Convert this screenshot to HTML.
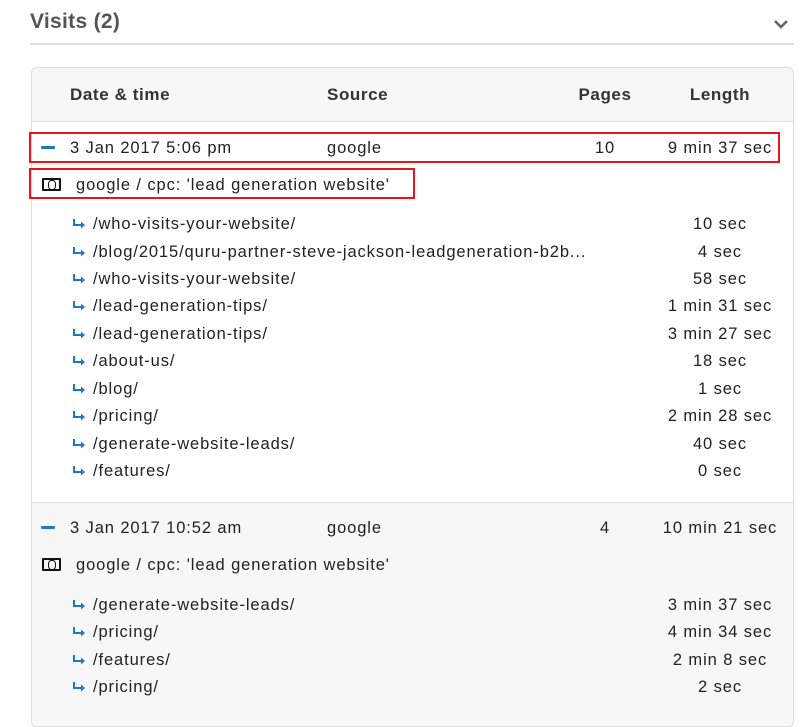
<!DOCTYPE html>
<html><head><meta charset="utf-8"><style>
*{margin:0;padding:0;box-sizing:border-box}
body{width:800px;height:718px;background:#fff;font-family:"Liberation Sans",sans-serif;color:#222;position:relative;overflow:hidden;font-size:16.5px;letter-spacing:0.9px}
.a{position:absolute;line-height:20px;white-space:nowrap}
.c{text-align:center}
.h{font-weight:bold;color:#333;font-size:17px;letter-spacing:0.6px}
.arr{position:absolute;width:14px;height:10px}
.box{position:absolute;left:31px;width:763px;top:67px;height:660px;border:1px solid #ddd;border-radius:6px;overflow:hidden}
.red{position:absolute;border:2px solid #e5161b}
.minus{position:absolute;width:14px;height:3px;background:#1a7bc4;border-radius:1px}
.money{position:absolute;width:19px;height:13px;border:2.5px solid #111;border-radius:1px}
.money:after{content:"";position:absolute;left:4px;top:0px;width:6px;height:8px;border:1.5px solid #111;border-radius:40%}
</style></head><body>
<div class="a" style="left:30px;top:10px;font-size:21px;line-height:24px;color:#555;font-weight:bold;letter-spacing:0.3px">Visits (2)</div>
<svg style="position:absolute;left:773px;top:19px" width="16" height="11"><path d="M2 2 L8 8 L14 2" stroke="#666" stroke-width="2.6" fill="none"/></svg>
<div style="position:absolute;left:30px;top:43px;width:764px;height:2px;background:#ddd"></div>
<div class="box">
<div style="position:absolute;left:0;top:0;right:0;height:54px;background:#f7f7f7;border-bottom:1px solid #e2e2e2"></div>
<div style="position:absolute;left:0;top:434px;right:0;bottom:0;background:#f7f7f7;border-top:1px solid #e2e2e2"></div>
</div>
<div class="a h" style="left:70px;top:85px">Date &amp; time</div>
<div class="a h" style="left:327px;top:85px">Source</div>
<div class="a h c" style="left:565px;width:80px;top:85px">Pages</div>
<div class="a h c" style="left:660px;width:120px;top:85px">Length</div>

<div class="red" style="left:29px;top:132px;width:751px;height:31px"></div>
<div class="red" style="left:29px;top:168px;width:386px;height:31px"></div>

<div class="minus" style="left:41px;top:146px"></div>
<div class="a" style="left:70px;top:138px">3 Jan 2017 5:06 pm</div>
<div class="a" style="left:327px;top:138px">google</div>
<div class="a c" style="left:575px;width:60px;top:138px">10</div>
<div class="a c" style="left:655px;width:130px;top:138px">9 min 37 sec</div>
<div class="money" style="left:42px;top:178px"></div>
<div class="a" style="left:76px;top:175px">google / cpc: 'lead generation website'</div>

<div class="minus" style="left:41px;top:526px"></div>
<div class="a" style="left:70px;top:518px">3 Jan 2017 10:52 am</div>
<div class="a" style="left:327px;top:518px">google</div>
<div class="a c" style="left:575px;width:60px;top:518px">4</div>
<div class="a c" style="left:655px;width:130px;top:518px">10 min 21 sec</div>
<div class="money" style="left:42px;top:558px"></div>
<div class="a" style="left:76px;top:555px">google / cpc: 'lead generation website'</div>

<div id="rows"></div>
<script>
var r=[[224,"/who-visits-your-website/","10 sec"],[252,"/blog/2015/quru-partner-steve-jackson-leadgeneration-b2b...","4 sec"],[279,"/who-visits-your-website/","58 sec"],[306,"/lead-generation-tips/","1 min 31 sec"],[334,"/lead-generation-tips/","3 min 27 sec"],[361,"/about-us/","18 sec"],[389,"/blog/","1 sec"],[416,"/pricing/","2 min 28 sec"],[444,"/generate-website-leads/","40 sec"],[471,"/features/","0 sec"],[605,"/generate-website-leads/","3 min 37 sec"],[632,"/pricing/","4 min 34 sec"],[660,"/features/","2 min 8 sec"],[687,"/pricing/","2 sec"]];
var h="";r.forEach(function(x){var t=x[0]-10;
h+='<svg class="arr" style="left:72px;top:'+(x[0]-5)+'px" viewBox="0 0 14 10"><path d="M2 0 V6 H10" stroke="#1a7bc4" stroke-width="2" fill="none"/><path d="M9 2.5 L13 6 L9 9.5Z" fill="#1a7bc4"/></svg>';
h+='<div class="a" style="left:93px;top:'+t+'px">'+x[1]+'</div><div class="a c" style="left:655px;width:130px;top:'+t+'px">'+x[2]+'</div>';});
document.getElementById("rows").innerHTML=h;
</script>
</body></html>
